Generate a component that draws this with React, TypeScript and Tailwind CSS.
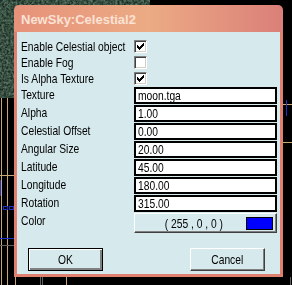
const font = "font-['Liberation_Sans',Arial,sans-serif]";

type Field = { label: string; value: string };

const checks = [
  { label: "Enable Celestial object", on: true },
  { label: "Enable Fog", on: false },
  { label: "Is Alpha Texture", on: true },
];

const fields: Field[] = [
  { label: "Texture", value: "moon.tga" },
  { label: "Alpha", value: "1.00" },
  { label: "Celestial Offset", value: "0.00" },
  { label: "Angular Size", value: "20.00" },
  { label: "Latitude", value: "45.00" },
  { label: "Longitude", value: "180.00" },
  { label: "Rotation", value: "315.00" },
];

// classic 7x7 check glyph, one run of pixels per row: [x, y, w]
const tick = [
  [6, 0, 1],
  [5, 1, 2],
  [0, 2, 1],
  [4, 2, 3],
  [0, 3, 2],
  [3, 3, 3],
  [0, 4, 5],
  [1, 5, 3],
  [2, 6, 1],
];

// the dialog font is a tall, narrow bitmap sans; squeeze Liberation Sans to match
function Narrow({ children, center }: { children: React.ReactNode; center?: boolean }) {
  return (
    <span
      className={`inline-block whitespace-nowrap scale-x-[0.79] ${center ? "origin-center" : "origin-left"}`}
    >
      {children}
    </span>
  );
}

function Backdrop() {
  return (
    <svg className="absolute inset-0" width="292" height="285" viewBox="0 0 292 285">
      <defs>
        <filter id="grain" x="0" y="0" width="100%" height="100%">
          <feTurbulence type="fractalNoise" baseFrequency="0.45" numOctaves="2" seed="4" />
          <feColorMatrix
            type="matrix"
            values="0 0 0 0 0.12  0 0 0 0 0.22  0 0 0 0 0.16  0 0 0 1.6 -0.35"
          />
        </filter>
      </defs>
      <rect width="292" height="285" fill="#000" />
      <rect x="0" y="0" width="150" height="98" fill="#16261c" />
      <rect x="0" y="0" width="150" height="98" filter="url(#grain)" />
      {/* editor grid lines */}
      <g stroke="#c8a870" strokeWidth="1" shapeRendering="crispEdges">
        <line x1="1.5" y1="98" x2="1.5" y2="285" />
        <line x1="7.5" y1="98" x2="7.5" y2="285" />
        <line x1="15.5" y1="270" x2="15.5" y2="285" />
        <line x1="66.5" y1="277" x2="66.5" y2="285" />
        <line x1="0" y1="175.5" x2="14" y2="175.5" />
        <line x1="283" y1="142.5" x2="292" y2="142.5" />
        <line x1="283" y1="104.5" x2="292" y2="104.5" />
      </g>
      <g stroke="#2030c0" strokeWidth="1" shapeRendering="crispEdges" fill="none">
        <line x1="0" y1="238.5" x2="14" y2="238.5" />
        <rect x="3.5" y="206.5" width="4" height="3" />
        <rect x="9.5" y="206.5" width="4" height="3" />
        <line x1="0.5" y1="180" x2="0.5" y2="196" />
        <line x1="286.5" y1="100" x2="286.5" y2="116" />
      </g>
      <g stroke="#606060" strokeWidth="1" shapeRendering="crispEdges">
        <line x1="0" y1="245.5" x2="14" y2="245.5" />
        <line x1="40.5" y1="277" x2="40.5" y2="285" />
        <line x1="42.5" y1="277" x2="42.5" y2="285" />
        <line x1="290.5" y1="277" x2="290.5" y2="285" />
      </g>
    </svg>
  );
}

function CheckBox({ on }: { on: boolean }) {
  return (
    <div className="w-[13px] h-[13px] bg-white border border-t-[#808080] border-l-[#808080] border-b-white border-r-white shadow-[inset_1px_1px_0_#404040,inset_-1px_-1px_0_#d4d0c8] flex items-center justify-center">
      {on && (
        <svg width="7" height="7" viewBox="0 0 7 7" shapeRendering="crispEdges">
          {tick.map(([x, y, w]) => (
            <rect key={`${x}-${y}`} x={x} y={y} width={w} height={1} fill="#000" />
          ))}
        </svg>
      )}
    </div>
  );
}

export default function App() {
  return (
    <div className={`relative w-[292px] h-[285px] overflow-hidden bg-black ${font}`}>
      <Backdrop />
      <div className="relative ml-[14px] mt-[5px] w-[269px] h-[272px] flex flex-col">
        <div className="h-[27px] shrink-0 rounded-t-[5px] bg-gradient-to-r from-[#e6917a] via-[#ecab84] to-[#da7f79] flex items-center pl-[7px] pt-[2px]">
          <span className="font-bold text-[13px] text-[#fae2d5]">NewSky:Celestial2</span>
        </div>
        <div className="flex-1 flex flex-col bg-[#d6e9ec] border-x-[3px] border-b-[3px] border-[#e0806e] pt-[6px] pb-[3px] pr-[3px] text-[13px] text-black leading-none">
          {checks.map((c) => (
            <div key={c.label} className="h-[16px] flex items-center">
              <span className="w-[117px] pl-[4px] shrink-0">
                <Narrow>{c.label}</Narrow>
              </span>
              <CheckBox on={c.on} />
            </div>
          ))}
          {fields.map((f) => (
            <div key={f.label} className="h-[18px] flex items-start">
              <span className="w-[117px] pl-[4px] shrink-0 pt-[2px]">
                <Narrow>{f.label}</Narrow>
              </span>
              <div className="mt-[1px] flex-1 h-[17px] bg-white border-2 border-black flex items-center pl-[2px]">
                <Narrow>{f.value}</Narrow>
              </div>
            </div>
          ))}
          <div className="h-[21px] flex items-start">
            <span className="w-[117px] pl-[4px] shrink-0 pt-[2px]">
              <Narrow>Color</Narrow>
            </span>
            <div className="mt-[1px] flex-1 h-[20px] border border-t-white border-l-white border-b-[#404040] border-r-[#404040] shadow-[inset_-1px_-1px_0_#808080] flex items-center">
              <span className="flex-1 text-center pl-[6px]">
                <Narrow center>( 255 , 0 , 0 )</Narrow>
              </span>
              <span className="w-[27px] h-[13px] bg-[#0000ff] border border-black mr-[3px]" />
            </div>
          </div>
          <div className="mt-auto flex justify-between pl-[11px] pr-[12px]">
            <button className="w-[75px] h-[23px] border border-black bg-[#d6e9ec] shadow-[inset_1px_1px_0_#fff,inset_-2px_-2px_0_#808080]">
              <Narrow center>OK</Narrow>
            </button>
            <button className="w-[75px] h-[23px] border border-t-white border-l-white border-b-[#404040] border-r-[#404040] bg-[#d6e9ec] shadow-[inset_-1px_-1px_0_#808080]">
              <Narrow center>Cancel</Narrow>
            </button>
          </div>
        </div>
      </div>
    </div>
  );
}
